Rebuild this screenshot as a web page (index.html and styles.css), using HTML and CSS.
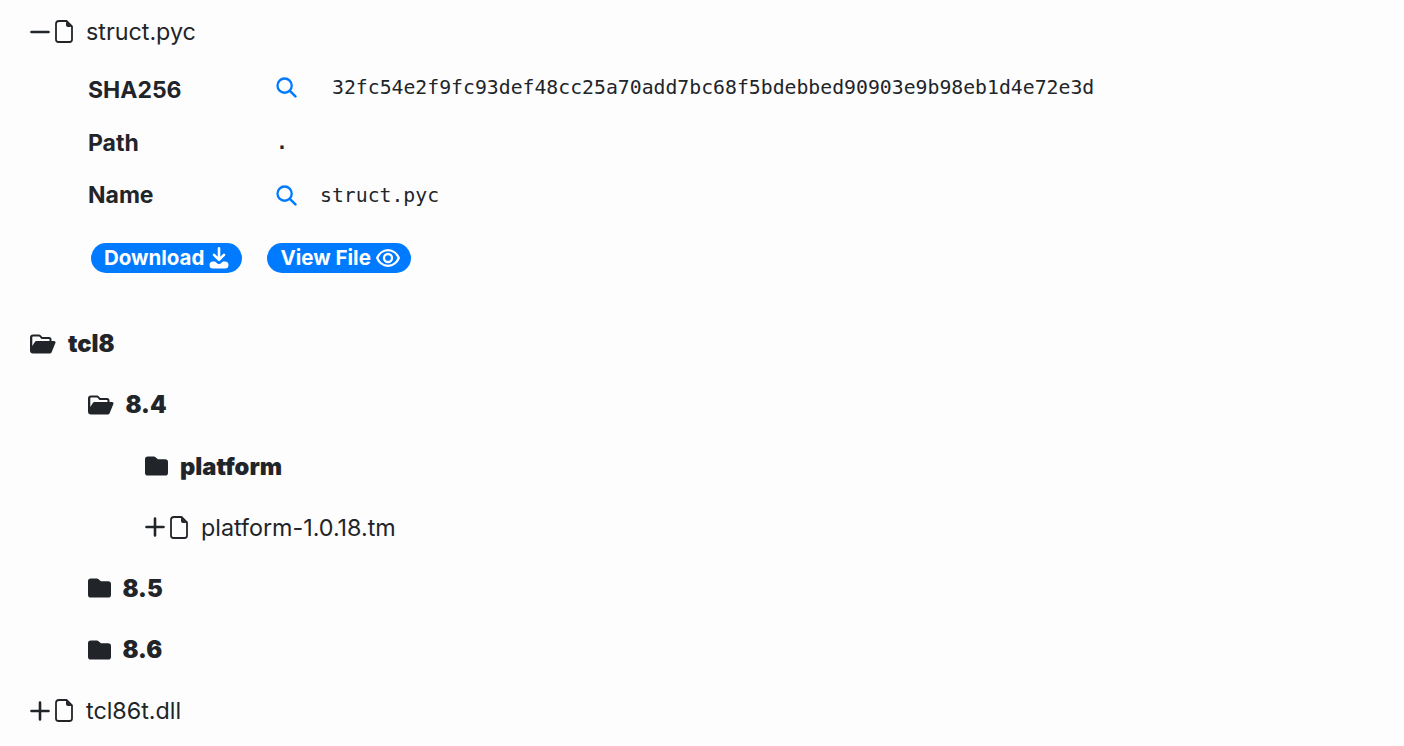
FILE: index.html
```html
<!DOCTYPE html>
<html lang="en">
<head>
    <meta charset="UTF-8">
    <title>Files</title>
    <link rel="stylesheet" href="styles.css">
</head>
<body>
    <svg class="icon-defs" xmlns="http://www.w3.org/2000/svg">
        <symbol id="i-file" viewBox="0 0 18 23"><path d="M4 1h7.500L17 6.500V19.500a2.500 2.500 0 0 1-2.500 2.500H3.500A2.500 2.500 0 0 1 1 19.500V4A3 3 0 0 1 4 1z" fill="none" stroke="currentColor" stroke-width="1.800" stroke-linejoin="round"/><path d="M11 1.500L16.500 7H13a2 2 0 0 1-2-2z" fill="currentColor"/></symbol>
        <symbol id="i-search" viewBox="0 0 20 20"><circle cx="8.200" cy="8.200" r="6.800" fill="none" stroke="currentColor" stroke-width="2.200"/><path d="M13.200 13.200L18.500 18.500" fill="none" stroke="currentColor" stroke-width="2.400" stroke-linecap="round"/></symbol>
        <symbol id="i-closed" viewBox="0 0 24 20"><path d="M3 0h6.200c.7 0 1.300.3 1.800.8L13.500 3H21a3 3 0 0 1 3 3V17a3 3 0 0 1-3 3H3a3 3 0 0 1-3-3V3a3 3 0 0 1 3-3z" fill="currentColor"/></symbol>
        <symbol id="i-open" viewBox="0 0 26 20"><path d="M3 .5h6c.6 0 1.200.2 1.600.7L12.300 3H19a2.500 2.500 0 0 1 2.500 2.500V7H19.500V5.500A.7.7 0 0 0 19 5H11.500L9.500 2.800A.7.7 0 0 0 9 2.500H3a.7.7 0 0 0-.7.7V12L4.800 8A2 2 0 0 1 6.500 7h17.500a1.500 1.500 0 0 1 1.300 2.300L21.500 18.500a2 2 0 0 1-1.800 1H3a3 3 0 0 1-3-3V3.500a3 3 0 0 1 3-3z" fill="currentColor"/></symbol>
        <symbol id="i-minus" viewBox="0 0 20 20"><path d="M1.500 10H18.500" fill="none" stroke="currentColor" stroke-width="2.600" stroke-linecap="round"/></symbol>
        <symbol id="i-plus" viewBox="0 0 20 20"><path d="M1.500 10H18.500M10 1.500V18.500" fill="none" stroke="currentColor" stroke-width="2.600" stroke-linecap="round"/></symbol>
        <symbol id="i-download" viewBox="0 0 20 22"><path d="M10 0a1.300 1.300 0 0 1 1.300 1.300v8.500l3-3a1.300 1.300 0 0 1 1.800 1.800l-5.200 5.200a1.300 1.300 0 0 1-1.800 0L3.900 8.600a1.300 1.300 0 0 1 1.800-1.800l3 3V1.300A1.300 1.300 0 0 1 10 0z" fill="currentColor"/><path d="M4 14.500h2l2.400 2c.9.800 2.300.8 3.200 0l2.400-2h2a3.500 3.500 0 0 1 0 7H4a3.500 3.500 0 0 1 0-7z" fill="currentColor"/></symbol>
        <symbol id="i-eye" viewBox="0 0 24 18"><path d="M12 1.200C6.800 1.200 2.800 5 1.200 9c1.600 4 5.600 7.800 10.800 7.800S21.200 13 22.800 9C21.200 5 17.200 1.200 12 1.200z" fill="none" stroke="currentColor" stroke-width="2.300"/><circle cx="12" cy="9" r="4" fill="none" stroke="currentColor" stroke-width="2.300"/></symbol>
    </svg>

    <div class="tree">
        <div class="row file-row">
            <svg class="toggle"><use href="#i-minus"/></svg>
            <svg class="file-icon"><use href="#i-file"/></svg>
            <span class="file-name">struct.pyc</span>
        </div>

        <div class="details">
            <div class="detail sha">
                <span class="detail-label">SHA256</span>
                <svg class="search"><use href="#i-search"/></svg>
                <code class="sha-value">32fc54e2f9fc93def48cc25a70add7bc68f5bdebbed90903e9b98eb1d4e72e3d</code>
            </div>
            <div class="detail path">
                <span class="detail-label">Path</span>
                <code class="path-value">.</code>
            </div>
            <div class="detail name">
                <span class="detail-label">Name</span>
                <svg class="search"><use href="#i-search"/></svg>
                <code class="name-value">struct.pyc</code>
            </div>
            <div class="actions">
                <a class="pill">Download <svg class="pill-icon"><use href="#i-download"/></svg></a>
                <a class="pill">View File <svg class="pill-icon eye"><use href="#i-eye"/></svg></a>
            </div>
        </div>

        <div class="row folder-row first-folder">
            <svg class="folder open"><use href="#i-open"/></svg>
            <span class="folder-name">tcl8</span>
        </div>
        <div class="nested">
            <div class="row folder-row">
                <svg class="folder open"><use href="#i-open"/></svg>
                <span class="folder-name">8.4</span>
            </div>
            <div class="nested">
                <div class="row folder-row">
                    <svg class="folder"><use href="#i-closed"/></svg>
                    <span class="folder-name">platform</span>
                </div>
                <div class="row file-row">
                    <svg class="toggle"><use href="#i-plus"/></svg>
                    <svg class="file-icon"><use href="#i-file"/></svg>
                    <span class="file-name">platform-1.0.18.tm</span>
                </div>
            </div>
            <div class="row folder-row">
                <svg class="folder"><use href="#i-closed"/></svg>
                <span class="folder-name">8.5</span>
            </div>
            <div class="row folder-row">
                <svg class="folder"><use href="#i-closed"/></svg>
                <span class="folder-name">8.6</span>
            </div>
        </div>
        <div class="row file-row">
            <svg class="toggle"><use href="#i-plus"/></svg>
            <svg class="file-icon"><use href="#i-file"/></svg>
            <span class="file-name">tcl86t.dll</span>
        </div>
    </div>
</body>
</html>
```

FILE: styles.css
```css
html, body {
    height: 100%;
}
body {
    margin: 0;
    background-color: #fdfdfe;
    color: #212529;
    font-family: Inter, "Liberation Sans", sans-serif;
    overflow: hidden;
}
.icon-defs {
    display: none;
}
.tree {
    padding: 1px 0 0 30px;
}
.row {
    display: flex;
    align-items: center;
    height: 61.200px;
}
.nested {
    padding-left: 57.500px;
}
.toggle {
    width: 20px;
    height: 20px;
    flex: none;
}
.file-icon {
    width: 18px;
    height: 23px;
    margin-left: 5px;
    flex: none;
}
.file-name {
    margin-left: 13px;
    font-size: 23.300px;
}
.folder {
    width: 23px;
    height: 20px;
    flex: none;
}
.folder.open {
    width: 26px;
}
.folder-name {
    margin-left: 12px;
    font-size: 23.700px;
    font-weight: 900;
}
.details {
    padding: 2px 0 0 58px;
}
.detail {
    display: flex;
    align-items: center;
    height: 52.500px;
}
.detail-label {
    width: 188px;
    font-size: 23px;
    font-weight: 700;
}
.search {
    width: 21px;
    height: 21px;
    color: #007bff;
    flex: none;
}
code {
    font-family: "DejaVu Sans Mono", monospace;
    font-size: 19.800px;
}
.sha .search,
.sha-value {
    margin-bottom: 6px;
}
.sha-value {
    margin-left: 35px;
}
.path-value {
    margin-bottom: 1px;
    font-weight: 700;
}
.name-value {
    margin-left: 23px;
}
.actions {
    display: flex;
    gap: 25px;
    margin: 21px 0 0 3px;
}
.pill {
    display: flex;
    align-items: center;
    gap: 5px;
    height: 30px;
    padding: 0 11px 0 13px;
    border-radius: 15px;
    background-color: #007bff;
    color: #fff;
    font-size: 20.500px;
    font-weight: 700;
}
.pill:first-child {
    padding-right: 13px;
}
.pill-icon {
    width: 20px;
    height: 22px;
}
.pill-icon.eye {
    width: 24px;
    height: 18px;
}
.first-folder {
    margin-top: 40.400px;
}
```
